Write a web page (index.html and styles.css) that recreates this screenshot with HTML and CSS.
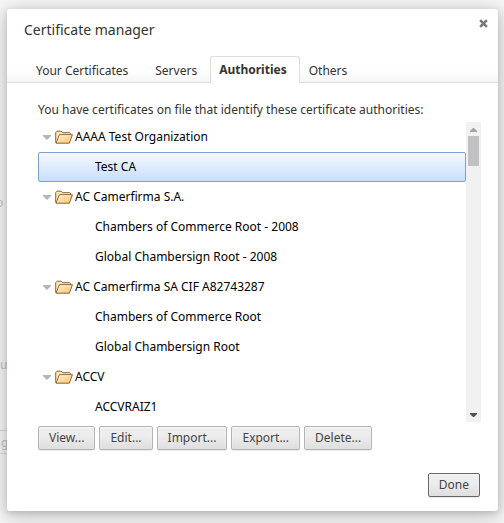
FILE: index.html
```html
<!DOCTYPE html>
<html lang="en">
<head>
<meta charset="utf-8">
<title>Certificate manager</title>
<link rel="stylesheet" href="styles.css">
</head>
<body>
<svg class="sprites" aria-hidden="true">
  <defs>
    <linearGradient id="paper" x1="0" y1="0" x2="1" y2="1">
      <stop offset="0" stop-color="#fff0cf"/>
      <stop offset="1" stop-color="#ffc36b"/>
    </linearGradient>
    <symbol id="folder" viewBox="0 0 18 14">
      <path d="M.7 12.5V2.6L2 1.2h4.2l1.3 1.5h7.2l.8 1V5" fill="#ffe6b8" stroke="#8b6238"/>
      <path d="M1 13.2 4.4 4.7H17.4L14.4 13.2Z" fill="url(#paper)" stroke="#8b6238" stroke-linejoin="round"/>
      <path d="M2.6 12 5.1 5.8H16" fill="none" stroke="#fff3da" stroke-width=".6"/>
    </symbol>
    <symbol id="twisty" viewBox="0 0 8 5">
      <path d="M0 0H8V1L4 5L0 1Z" fill="#b5b5b5"/>
    </symbol>
  </defs>
</svg>
<div class="behind" aria-hidden="true">
  <span class="scrap scrap-label">o</span>
  <span class="scrap scrap-link">u</span>
  <span class="scrap scrap-button">g</span>
</div>
<main class="dialog" role="dialog" aria-labelledby="title">
  <header class="header">
    <h1 id="title">Certificate manager</h1>
    <button class="close" aria-label="Close"><svg viewBox="0 0 8 8"><path d="M1 1 7 7M7 1 1 7" stroke="#777" stroke-width="2.2"/></svg></button>
  </header>
  <div class="tabs" role="tablist">
    <button class="tab" role="tab">Your Certificates</button>
    <button class="tab" role="tab">Servers</button>
    <button class="tab active" role="tab" aria-selected="true">Authorities</button>
    <button class="tab" role="tab">Others</button>
  </div>
  <section class="panel">
    <p class="intro">You have certificates on file that identify these certificate authorities:</p>
    <div class="viewport">
      <ul class="tree">
        <li class="row"><svg class="twisty"><use href="#twisty"/></svg><svg class="folder"><use href="#folder"/></svg>AAAA Test Organization</li>
        <li class="row child selected">Test CA</li>
        <li class="row"><svg class="twisty"><use href="#twisty"/></svg><svg class="folder"><use href="#folder"/></svg>AC Camerfirma S.A.</li>
        <li class="row child">Chambers of Commerce Root - 2008</li>
        <li class="row child">Global Chambersign Root - 2008</li>
        <li class="row"><svg class="twisty"><use href="#twisty"/></svg><svg class="folder"><use href="#folder"/></svg>AC Camerfirma SA CIF A82743287</li>
        <li class="row child">Chambers of Commerce Root</li>
        <li class="row child">Global Chambersign Root</li>
        <li class="row"><svg class="twisty"><use href="#twisty"/></svg><svg class="folder"><use href="#folder"/></svg>ACCV</li>
        <li class="row child">ACCVRAIZ1</li>
      </ul>
      <div class="scrollbar" aria-hidden="true">
        <svg class="arrow" viewBox="0 0 15 14"><path d="M4 10V9L7 6H8L11 9V10Z" fill="#a3a3a3"/></svg>
        <div class="track"><div class="thumb"></div></div>
        <svg class="arrow" viewBox="0 0 15 14"><path d="M4 5H11V6L8 9H7L4 6Z" fill="#505050"/></svg>
      </div>
    </div>
    <div class="actions">
      <button class="button">View...</button>
      <button class="button">Edit...</button>
      <button class="button">Import...</button>
      <button class="button">Export...</button>
      <button class="button">Delete...</button>
    </div>
  </section>
  <footer class="footer">
    <button class="button primary">Done</button>
  </footer>
</main>
</body>
</html>
```
FILE: styles.css
```css
* { box-sizing: border-box; }

body {
  margin: 0;
  padding: 9px 6px 12px 7px;
  background: #fbfbfb;
  color: #333;
  font: 12px/18px "Noto Sans", sans-serif;
  overflow: hidden;
}

button { font: inherit; color: inherit; }

.sprites { position: absolute; width: 0; height: 0; }

/* Settings page showing faintly past the dialog's edge */
.scrap { position: absolute; left: -4px; color: #c4c9cd; }
.scrap-label { top: 194px; }
.scrap-link { top: 356px; left: 0; color: #b9c8e6; }
.scrap-button {
  top: 430px;
  width: 24px;
  height: 24px;
  padding-left: 4px;
  line-height: 24px;
  border: 1px solid #ddd;
}

.dialog {
  position: relative;
  display: flex;
  flex-direction: column;
  background: #fff;
  border-radius: 3px;
  box-shadow: 0 4px 23px 5px rgba(0, 0, 0, .2), 0 2px 6px rgba(0, 0, 0, .15);
}

.header {
  display: flex;
  justify-content: space-between;
  height: 47px;
  padding: 10px 10px 0 17px;
}
h1 { margin: 0; font-size: 14px; line-height: 22px; font-weight: 400; }
.close { width: 9px; height: 9px; padding: 0; border: 0; background: none; }
.close svg { display: block; width: 9px; height: 9px; }

.tabs {
  display: flex;
  height: 27px;
  padding-left: 15px;
  border-bottom: 1px solid #ddd;
  background: linear-gradient(#fff 50%, #f6f6f6);
}
.tab {
  height: 27px;
  padding: 2px 12px 0 13px;
  border: 1px solid transparent;
  border-bottom: 0;
  background: none;
}
.tab.active {
  padding: 0 12px 0 8px;
  border-color: #ddd;
  border-radius: 3px 3px 0 0;
  background: #fff;
  font-weight: 700;
}
.active + .tab { padding-left: 8px; }

.panel { padding: 18px 17px 0 31px; }
.intro { margin: 0 0 3px; }

.viewport { display: flex; }
.tree { flex: 1; margin: 0; padding: 0; list-style: none; color: #000; }
.row {
  display: flex;
  align-items: center;
  height: 30px;
  padding: 0 4px;
  border: 1px solid transparent;
  border-radius: 2px;
}
.child { padding-left: 56px; }
.selected { border-color: #7da2ce; background: linear-gradient(#f5f9ff, #c8defc); }
.twisty { width: 8px; height: 5px; margin-right: 4px; }
.folder { width: 18px; height: 14px; margin-right: 2px; }

.scrollbar { display: flex; flex-direction: column; width: 15px; background: #f1f1f1; }
.arrow { width: 15px; height: 14px; }
.track { flex: 1; padding: 0 2px; }
.thumb { height: 30px; background: #c1c1c1; }

.actions { display: flex; gap: 4px; padding-top: 4px; }
.button {
  height: 24px;
  padding: 0 10px;
  border: 1px solid #b3b3b3;
  border-radius: 2px;
  background: linear-gradient(#ededed 38%, #dedede);
  box-shadow: 0 1px 0 rgba(0, 0, 0, .08), inset 0 1px 2px rgba(255, 255, 255, .75);
  color: #444;
  line-height: 22px;
}
.primary { border-color: #666; }

.footer { display: flex; justify-content: flex-end; padding: 23px 18px 14px; }
```
